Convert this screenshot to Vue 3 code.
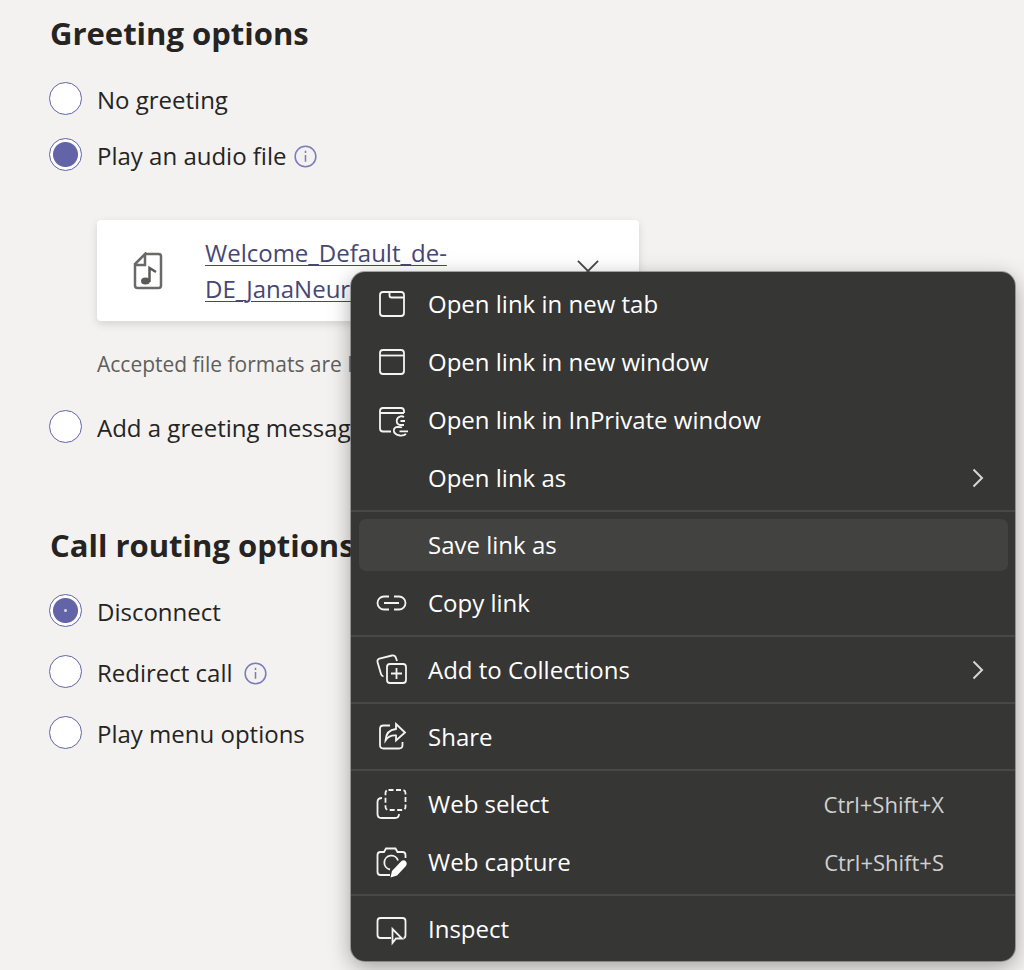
<script setup>
import { ref } from 'vue'

const greeting = ref('audio')
const routing = ref('disconnect')

const groups = [
  [
    { label: 'Open link in new tab', icon: 'tab' },
    { label: 'Open link in new window', icon: 'window' },
    { label: 'Open link in InPrivate window', icon: 'private' },
    { label: 'Open link as', submenu: true },
  ],
  [
    { label: 'Save link as', active: true },
    { label: 'Copy link', icon: 'link' },
  ],
  [{ label: 'Add to Collections', icon: 'collections', submenu: true }],
  [{ label: 'Share', icon: 'share' }],
  [
    { label: 'Web select', icon: 'select', keys: 'Ctrl+Shift+X' },
    { label: 'Web capture', icon: 'capture', keys: 'Ctrl+Shift+S' },
  ],
  [{ label: 'Inspect', icon: 'inspect' }],
]
</script>

<template>
  <main class="page">
    <section class="options" aria-labelledby="greeting-title">
      <h2 id="greeting-title">Greeting options</h2>
      <div class="row">
        <input id="g-none" v-model="greeting" type="radio" name="greeting" value="none" />
        <label for="g-none">No greeting</label>
      </div>
      <div class="row">
        <input id="g-audio" v-model="greeting" type="radio" name="greeting" value="audio" />
        <label for="g-audio">Play an audio file</label>
        <svg class="info" viewBox="0 0 24 24" aria-hidden="true">
          <circle cx="12" cy="12" r="10.8" />
          <path d="M12 10.5v7M12 6v2.4" />
        </svg>
      </div>

      <div class="card">
        <svg class="file-icon" viewBox="0 0 30 38" aria-hidden="true">
          <path class="outline" d="M12 2H25.5Q28 2 28 4.500V33.500Q28 36 25.500 36H4.500Q2 36 2 33.500V12L12 2V13H2" />
          <path class="stem" d="M16.500 30V16L23 20" />
          <ellipse cx="12.500" cy="29" rx="4.500" ry="3.500" />
        </svg>
        <a href="#">Welcome_Default_de-DE_JanaNeural.wav</a>
        <button class="remove" type="button" aria-label="Remove file">
          <svg viewBox="0 0 24 24" aria-hidden="true"><path d="M1 1l22 22M23 1L1 23" /></svg>
        </button>
      </div>
      <p class="hint">Accepted file formats are MP3</p>

      <div class="row">
        <input id="g-message" v-model="greeting" type="radio" name="greeting" value="message" />
        <label for="g-message">Add a greeting message</label>
      </div>
    </section>

    <section class="options routing" aria-labelledby="routing-title">
      <h2 id="routing-title">Call routing options</h2>
      <div class="row">
        <input id="r-disc" v-model="routing" class="focus-dot" type="radio" name="routing" value="disconnect" />
        <label for="r-disc">Disconnect</label>
      </div>
      <div class="row">
        <input id="r-redirect" v-model="routing" type="radio" name="routing" value="redirect" />
        <label for="r-redirect">Redirect call</label>
        <svg class="info spaced" viewBox="0 0 24 24" aria-hidden="true">
          <circle cx="12" cy="12" r="10.8" />
          <path d="M12 10.5v7M12 6v2.4" />
        </svg>
      </div>
      <div class="row">
        <input id="r-menu" v-model="routing" type="radio" name="routing" value="menu" />
        <label for="r-menu">Play menu options</label>
      </div>
    </section>

    <nav class="menu" aria-label="Link actions">
      <ul v-for="(group, i) in groups" :key="i">
        <li v-for="item in group" :key="item.label">
          <button type="button" class="item" :class="{ active: item.active }">
            <svg class="icon" viewBox="0 0 32 32" aria-hidden="true">
              <template v-if="item.icon === 'tab'">
                <rect x="5" y="4" width="24" height="24" rx="3" />
                <path d="M14.500 4v3.500q0 2 2 2H29" />
              </template>
              <template v-else-if="item.icon === 'window'">
                <rect x="5" y="4" width="24" height="24" rx="3" />
                <path d="M5 9.500h24" />
              </template>
              <template v-else-if="item.icon === 'private'">
                <path d="M29 9V7q0-3-3-3H8Q5 4 5 7v17.500q0 3 3 3h8M5 9h24" />
                <path d="M29 13q-1.500-1-3.500-.7-3.500.7-3.800 4.200 0 4 3.300 4.500h4M25.500 17H30" />
                <path d="M27 23.500q-1.500-.7-4-.7-4 .2-4.200 3.400 0 4.300 6.200 5.300 4 .3 6-1.500M24.500 27.300H33" />
              </template>
              <template v-else-if="item.icon === 'link'">
                <path d="M14 9.500H9a6.500 6.500 0 0 0 0 13h5M19 9.500h5a6.500 6.500 0 0 1 0 13h-5M9 16h15" />
              </template>
              <template v-else-if="item.icon === 'collections'">
                <path d="M8.500 22.500Q6.500 22 6 20L2.500 8Q2 5.500 4.500 4.500L17 1.500q3-.5 4 2.500l1 3" />
                <rect x="12" y="10" width="19" height="19" rx="3" />
                <path d="M21.500 14v11M16 19.500h11" />
              </template>
              <template v-else-if="item.icon === 'share'">
                <path d="M15 4.500H8.500Q5 4.500 5 8v16q0 3.500 3.500 3.500H24q3.500 0 3.500-3.500v-3" />
                <path d="M21 3l9 8.500-9 8v-5q-7-.5-10.500 5Q11 9 21 8z" />
              </template>
              <template v-else-if="item.icon === 'select'">
                <rect x="10.500" y="2" width="20" height="20" rx="3" stroke-dasharray="5 2.500" />
                <path d="M7 10Q2.500 10 2.500 14v12q0 4 4 4H20q4 0 4-4" />
              </template>
              <template v-else-if="item.icon === 'capture'">
                <path d="M15 29H5.500q-3 0-3-3V9q0-3 3-3H9l2-3.500h9.500l2 3.500h5q3 0 3 3v3" />
                <path d="M15 23.500a7 7 0 1 1 8-9" />
                <path class="solid" d="M30.500 15q2.500 2.500 0 5.500L22 29.500l-6.500 2 1.500-6.500 9-9.500q2.500-2 4.500-.5z" />
              </template>
              <template v-else-if="item.icon === 'inspect'">
                <path d="M16 25H5.500q-3 0-3-3V8q0-3 3-3h22q3 0 3 3v14q0 3-2 3" />
                <path d="M17.500 16v14l3.500-4.500h6z" />
              </template>
            </svg>
            <span class="text">{{ item.label }}</span>
            <kbd v-if="item.keys">{{ item.keys }}</kbd>
            <svg v-if="item.submenu" class="chevron" viewBox="0 0 12 20" aria-hidden="true">
              <path d="M1.500 1.500L10 10l-8.500 8.500" />
            </svg>
          </button>
        </li>
      </ul>
    </nav>
  </main>
</template>

<style>
body {
  margin: 0;
  background: #f3f2f0;
}
</style>

<style scoped>
.page {
  box-sizing: border-box;
  position: relative;
  min-height: 100vh;
  overflow: hidden;
  padding: 15px 49px;
  font-family: "Open Sans", "Noto Sans", sans-serif;
  font-size: 24px;
  line-height: 36px;
  color: #252423;
}
h2 {
  margin: 0 0 29px 1px;
  font-size: 31px;
  line-height: 36px;
  font-weight: 700;
}
.row {
  display: flex;
  align-items: center;
  height: 36px;
  margin-bottom: 20px;
}
.row label {
  margin-top: 3px;
  margin-left: 15px;
  font-weight: 400;
  white-space: nowrap;
}
.row input {
  appearance: none;
  flex: none;
  width: 33px;
  height: 33px;
  margin: 0;
  border: 1px solid #6264a7;
  border-radius: 50%;
  background: #fff;
}
.row input:checked {
  background: radial-gradient(circle, #6264a7 12px, #fff 13px);
}
.row input.focus-dot:checked {
  background: radial-gradient(circle, #d0d0e8 1px, #6264a7 2px, #6264a7 12px, #fff 13px);
}
.info {
  width: 23px;
  height: 23px;
  margin-top: 5px;
  margin-left: 7px;
  fill: none;
  stroke: #7b7cbc;
  stroke-width: 1.600;
}
.info.spaced {
  margin-left: 11px;
}
.card {
  display: flex;
  align-items: center;
  box-sizing: border-box;
  width: 542px;
  min-height: 101px;
  margin: 48px 0 25px 48px;
  padding: 14px 40px 14px 36px;
  border-radius: 4px;
  background: #fff;
  box-shadow: 0 3px 8px rgba(0, 0, 0, 0.13);
}
.file-icon {
  flex: none;
  width: 30px;
  height: 38px;
  fill: #5a5958;
}
.file-icon .outline,
.file-icon .stem {
  fill: none;
  stroke: #6a6968;
  stroke-width: 2.500;
}
.file-icon .stem {
  stroke: #5a5958;
}
.card a {
  width: 260px;
  margin-left: 42px;
  color: #464775;
  font-weight: 400;
  text-decoration: underline;
  text-decoration-thickness: 1px;
  text-underline-offset: 3px;
}
.remove {
  margin-left: auto;
  padding: 0;
  border: 0;
  background: none;
  line-height: 0;
}
.remove svg {
  width: 22px;
  height: 22px;
  fill: none;
  stroke: #484644;
  stroke-width: 2;
}
.hint {
  margin: 0 0 26px 48px;
  font-size: 21px;
  line-height: 36px;
  font-weight: 400;
  color: #605e5c;
}
.routing {
  margin-top: 83px;
}
.routing .row {
  margin-bottom: 25px;
}

.menu {
  position: absolute;
  top: 272px;
  left: 351px;
  right: 9px;
  box-sizing: border-box;
  padding: 3px 0;
  border-radius: 14px;
  background: #363635;
  box-shadow: 0 0 0 1px rgba(90, 90, 90, 0.5), 0 6px 22px rgba(0, 0, 0, 0.35);
  color: #fff;
}
.menu ul {
  margin: 0;
  padding: 0;
  list-style: none;
}
.menu ul + ul {
  margin-top: 3px;
  padding-top: 4px;
  border-top: 2px solid #484847;
}
.item {
  display: flex;
  align-items: center;
  box-sizing: border-box;
  width: calc(100% - 15px);
  height: 52px;
  margin: 3px 8px;
  padding: 0 24px 0 16px;
  border: 0;
  border-radius: 7px;
  background: none;
  color: inherit;
  font: inherit;
  text-align: left;
}
.menu li {
  display: flow-root;
}
.item.active {
  background: #424241;
}
.icon {
  flex: none;
  width: 32px;
  height: 32px;
  margin-right: 21px;
  overflow: visible;
  fill: none;
  stroke: #f4f4f4;
  stroke-width: 1.800;
}
.icon .solid {
  fill: #fff;
  stroke: none;
}
.text {
  flex: 1;
  white-space: nowrap;
}
kbd {
  margin-right: 40px;
  font-family: inherit;
  font-size: 22px;
  font-weight: 400;
  color: #d0d0d0;
}
.chevron {
  width: 12px;
  height: 20px;
  fill: none;
  stroke: #d6d6d6;
  stroke-width: 2;
}
</style>
